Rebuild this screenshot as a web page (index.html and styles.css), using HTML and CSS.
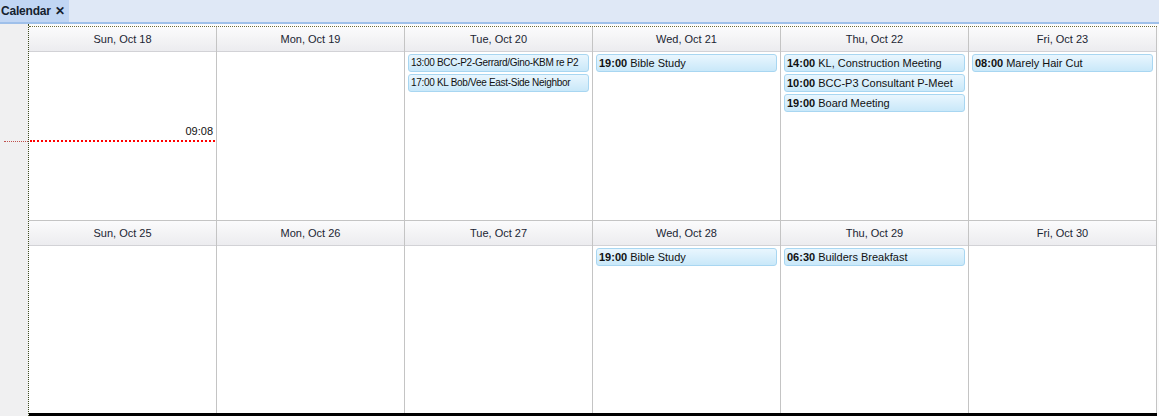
FILE: index.html
```html
<!DOCTYPE html>
<html lang="en">
<head>
    <meta charset="UTF-8">
    <title>Calendar</title>
    <link rel="stylesheet" href="styles.css">
</head>
<body>

    <div class="tabbar">
        <div class="tab">Calendar <span class="tab-close">✕</span></div>
    </div>
    <div class="tabline"></div>

    <div class="main">
        <!-- left gutter -->
        <div class="gutter">
            <div class="gutter-now"></div>
        </div>

        <div class="weeks">
            <!-- week 1 -->
            <div class="week week1">
                <div class="day">
                    <div class="day-head">Sun, Oct 18</div>
                    <div class="day-body">
                        <div class="now-label">09:08</div>
                        <div class="now-line"></div>
                    </div>
                </div>
                <div class="day">
                    <div class="day-head">Mon, Oct 19</div>
                    <div class="day-body"></div>
                </div>
                <div class="day">
                    <div class="day-head">Tue, Oct 20</div>
                    <div class="day-body">
                        <div class="event small">13:00 BCC-P2-Gerrard/Gino-KBM re P2</div>
                        <div class="event small">17:00 KL Bob/Vee East-Side Neighbor</div>
                    </div>
                </div>
                <div class="day">
                    <div class="day-head">Wed, Oct 21</div>
                    <div class="day-body">
                        <div class="event"><b>19:00</b> Bible Study</div>
                    </div>
                </div>
                <div class="day">
                    <div class="day-head">Thu, Oct 22</div>
                    <div class="day-body">
                        <div class="event"><b>14:00</b> KL, Construction Meeting</div>
                        <div class="event"><b>10:00</b> BCC-P3 Consultant P-Meet</div>
                        <div class="event"><b>19:00</b> Board Meeting</div>
                    </div>
                </div>
                <div class="day">
                    <div class="day-head">Fri, Oct 23</div>
                    <div class="day-body">
                        <div class="event"><b>08:00</b> Marely Hair Cut</div>
                    </div>
                </div>
            </div>

            <!-- week 2 -->
            <div class="week week2">
                <div class="day">
                    <div class="day-head">Sun, Oct 25</div>
                    <div class="day-body"></div>
                </div>
                <div class="day">
                    <div class="day-head">Mon, Oct 26</div>
                    <div class="day-body"></div>
                </div>
                <div class="day">
                    <div class="day-head">Tue, Oct 27</div>
                    <div class="day-body"></div>
                </div>
                <div class="day">
                    <div class="day-head">Wed, Oct 28</div>
                    <div class="day-body">
                        <div class="event"><b>19:00</b> Bible Study</div>
                    </div>
                </div>
                <div class="day">
                    <div class="day-head">Thu, Oct 29</div>
                    <div class="day-body">
                        <div class="event"><b>06:30</b> Builders Breakfast</div>
                    </div>
                </div>
                <div class="day">
                    <div class="day-head">Fri, Oct 30</div>
                    <div class="day-body"></div>
                </div>
            </div>
        </div>
    </div>

</body>
</html>
```

FILE: styles.css
```css
* {
    box-sizing: border-box;
}
body {
    font-family: "Liberation Sans", Arial, sans-serif;
    font-size: 11px;
    color: #000;
    background: #fff;
    margin: 0;
    padding: 0;
    overflow: hidden;
}
.tabbar {
    height: 22px;
    background: #dfe8f6;
    display: flex;
}
.tab {
    display: flex;
    align-items: center;
    gap: 4px;
    padding: 0 4px 0 1px;
    background: #c1d6f4;
    font-size: 12px;
    font-weight: bold;
    letter-spacing: -0.2px;
    color: #15212e;
}
.tab-close {
    font-size: 12px;
    font-weight: bold;
}
.tabline {
    height: 2px;
    background: #9fc0ea;
}
.main {
    display: flex;
    height: 392px;
}
.gutter {
    position: relative;
    width: 29px;
    background: #f0f0f1;
    border-right: 1px dotted #3c4a1e;
}
.gutter-now {
    position: absolute;
    left: 4px;
    right: 0;
    top: 117px;
    border-top: 1px dotted #c0504d;
}
.weeks {
    flex: 1;
    padding-top: 2px;
    background: #fbfbfb;
}
.week {
    display: grid;
    grid-template-columns: repeat(6, 188px);
    width: 1128px;
    background: #fff;
}
.week1 {
    border-top: 1px dotted #6d6d3c;
}
.week1 .day-body {
    height: 169px;
    border-bottom: 1px solid #c4c4c4;
}
.week2 .day-body {
    height: 167px;
}
.week2 {
    border-bottom: 3px solid #000;
}
.day {
    border-right: 1px solid #c4c4c4;
}
.day-head {
    height: 25px;
    line-height: 24px;
    text-align: center;
    color: #1b2533;
    background: linear-gradient(#fbfbfc, #ececef);
    border-bottom: 1px solid #d2d2d6;
}
.day-body {
    position: relative;
    padding-top: 2px;
}
.event {
    height: 18px;
    line-height: 16px;
    margin: 0 3px 2px 3px;
    padding: 0 2px;
    border: 1px solid #a8d6f1;
    border-radius: 3px;
    background: linear-gradient(#e9f6fe, #c9e8f9);
    color: #111;
    white-space: nowrap;
    overflow: hidden;
}
.event.small {
    font-size: 10px;
    letter-spacing: -0.3px;
}
.now-label {
    position: absolute;
    right: 3px;
    top: 73px;
    color: #111;
}
.now-line {
    position: absolute;
    left: 1px;
    right: 1px;
    top: 88px;
    border-top: 2px dotted #f00;
}
```
